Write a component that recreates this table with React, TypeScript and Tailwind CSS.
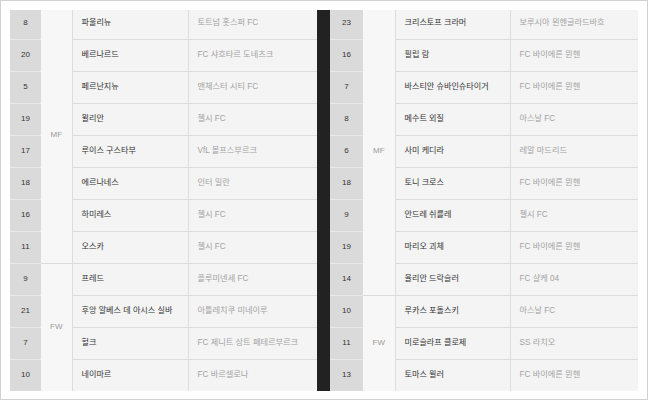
type Row = { no: string; name: string; club: string };

const left: Row[] = [
  { no: "8", name: "파울리뉴", club: "토트넘 홋스퍼 FC" },
  { no: "20", name: "베르나르드", club: "FC 샤흐타르 도네츠크" },
  { no: "5", name: "페르난지뉴", club: "맨체스터 시티 FC" },
  { no: "19", name: "윌리안", club: "첼시 FC" },
  { no: "17", name: "루이스 구스타부", club: "VfL 볼프스부르크" },
  { no: "18", name: "에르나네스", club: "인터 밀란" },
  { no: "16", name: "하미레스", club: "첼시 FC" },
  { no: "11", name: "오스카", club: "첼시 FC" },
  { no: "9", name: "프레드", club: "플루미넨세 FC" },
  { no: "21", name: "후앙 알베스 데 아시스 실바", club: "아틀레치쿠 미네이루" },
  { no: "7", name: "헐크", club: "FC 제니트 상트 페테르부르크" },
  { no: "10", name: "네이마르", club: "FC 바르셀로나" },
];

const right: Row[] = [
  { no: "23", name: "크리스토프 크라머", club: "보루시아 묀헨글라드바흐" },
  { no: "16", name: "필립 람", club: "FC 바이에른 뮌헨" },
  { no: "7", name: "바스티안 슈바인슈타이거", club: "FC 바이에른 뮌헨" },
  { no: "8", name: "메수트 외질", club: "아스날 FC" },
  { no: "6", name: "사미 케디라", club: "레알 마드리드" },
  { no: "18", name: "토니 크로스", club: "FC 바이에른 뮌헨" },
  { no: "9", name: "안드레 쉬를레", club: "첼시 FC" },
  { no: "19", name: "마리오 괴체", club: "FC 바이에른 뮌헨" },
  { no: "14", name: "율리안 드락슬러", club: "FC 샬케 04" },
  { no: "10", name: "루카스 포돌스키", club: "아스날 FC" },
  { no: "11", name: "미로슬라프 클로제", club: "SS 라치오" },
  { no: "13", name: "토마스 뮐러", club: "FC 바이에른 뮌헨" },
];

function Side({ rows, mf, cols }: { rows: Row[]; mf: number; cols: number[] }) {
  return (
    <div className="h-full overflow-hidden">
      <table className="-mt-[3px] table-fixed border-collapse" style={{ width: cols.reduce((a, b) => a + b, 0) }}>
        <colgroup>
          {cols.map((w, i) => (
            <col key={i} style={{ width: w }} />
          ))}
        </colgroup>
        <tbody>
          {rows.map((r, i) => (
            <tr key={i} className="h-[32px]">
              <td className="border-b border-[#e9e9e9] bg-[#dadada] p-0 text-center text-[8px] text-[#333]">{r.no}</td>
              {(i === 0 || i === mf) && (
                <td
                  rowSpan={i === 0 ? mf : rows.length - mf}
                  className="border-b border-r border-[#dcdcdc] bg-[#f7f7f7] p-0 text-center text-[8px] text-[#999]"
                >
                  {i === 0 ? "MF" : "FW"}
                </td>
              )}
              <td className="truncate border-b border-r border-[#dcdcdc] bg-[#f4f4f4] p-0 pl-[9px] text-[8.1px] text-[#333]">{r.name}</td>
              <td className="truncate border-b border-[#dcdcdc] bg-[#f4f4f4] p-0 pl-[9px] text-[8.2px] text-[#a3a3a3]">{r.club}</td>
            </tr>
          ))}
        </tbody>
      </table>
    </div>
  );
}

export default function App() {
  return (
    <div
      className="h-[400px] w-[648px] border border-[#d2d2d2] bg-white px-[9px] pt-[9px] pb-[7px]"
      style={{ fontFamily: '"Liberation Sans", "Noto Sans CJK KR", sans-serif' }}
    >
      <div className="flex h-[381px]">
        <Side rows={left} mf={8} cols={[31, 31, 116, 129]} />
        <div className="w-[13px] shrink-0 bg-[#222]" />
        <Side rows={right} mf={9} cols={[33, 32, 115, 128]} />
      </div>
    </div>
  );
}
